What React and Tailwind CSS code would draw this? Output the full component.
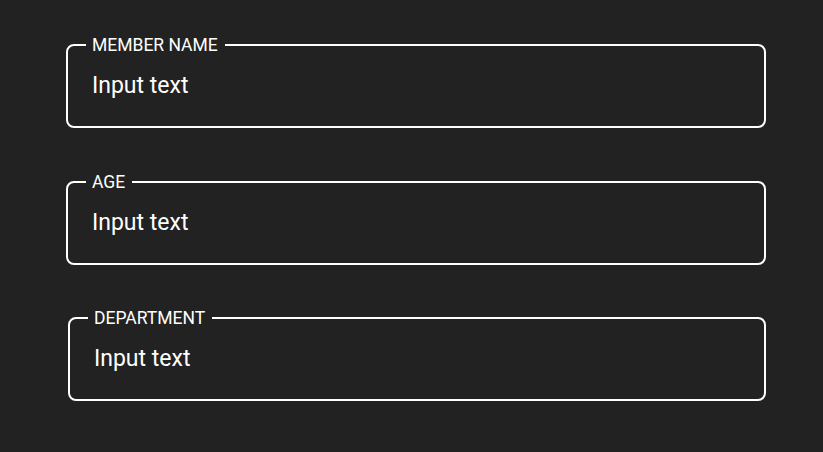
import { useState } from 'react';

function OutlinedField({ label, defaultValue, className = '' }) {
  const [value, setValue] = useState(defaultValue);

  return (
    <fieldset className={`h-[93px] rounded-[8px] border-2 border-white pl-[18px] pr-[22px] ${className}`}>
      <legend className="pl-[6px] pr-[7px] text-[17.5px] leading-[20px] text-white">{label}</legend>
      <input
        value={value}
        onChange={(e) => setValue(e.target.value)}
        className="mt-[17px] w-full bg-transparent pl-[6px] text-[23px] leading-[28px] text-white outline-none"
      />
    </fieldset>
  );
}

export default function App() {
  return (
    <div className="min-h-screen bg-[#222222] pt-[35px] font-['Roboto',sans-serif]">
      <div className="flex flex-col">
        <OutlinedField label="MEMBER NAME" defaultValue="Input text" className="ml-[66px] w-[700px]" />
        <OutlinedField label="AGE" defaultValue="Input text" className="ml-[66px] mt-[44px] w-[700px]" />
        <OutlinedField label="DEPARTMENT" defaultValue="Input text" className="ml-[68px] mt-[43px] w-[698px]" />
      </div>
    </div>
  );
}
